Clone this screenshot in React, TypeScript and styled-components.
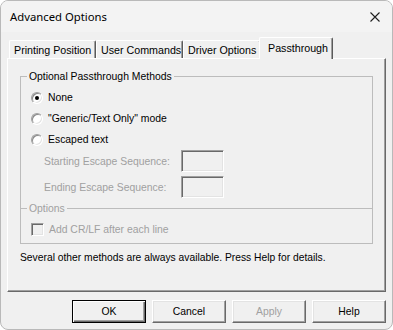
import React from 'react';
import styled, { createGlobalStyle } from 'styled-components';

const GlobalStyle = createGlobalStyle`
  html, body {
    margin: 0;
    padding: 0;
    background: #ffffff;
  }
  body {
    font-family: "Liberation Sans", Arial, sans-serif;
    font-size: 10.4px;
    color: #000;
  }
  * {
    box-sizing: border-box;
  }
`;

const Window = styled.div`
  width: 393px;
  height: 330px;
  display: flex;
  flex-direction: column;
  background: #f0f0f0;
  border: 1px solid #b9b9b9;
  border-radius: 8px;
  overflow: hidden;
`;

const TitleBar = styled.div`
  height: 31px;
  display: flex;
  align-items: center;
  justify-content: space-between;
  padding: 0 12px 0 9px;
  background: #f3f3f3;
  font-family: "Noto Sans", "Liberation Sans", sans-serif;
  font-size: 11.3px;
  color: #000;
`;

const Body = styled.div`
  display: flex;
  flex-direction: column;
  padding: 4px 6px 0 6px;
`;

const TabStrip = styled.div`
  height: 22px;
  display: flex;
  align-items: flex-end;
  padding-left: 2px;
  position: relative;
  z-index: 1;
  font-size: 10.7px;
`;

const Tab = styled.div<{ $w: number; $active?: boolean }>`
  width: ${p => p.$w}px;
  height: ${p => (p.$active ? 22 : 18)}px;
  margin-left: ${p => (p.$active ? -2 : 0)}px;
  margin-bottom: ${p => (p.$active ? -1 : 0)}px;
  display: flex;
  align-items: center;
  padding-left: ${p => (p.$active ? 8 : 4)}px;
  padding-bottom: ${p => (p.$active ? 2 : 0)}px;
  white-space: nowrap;
  overflow: hidden;
  background: #f0f0f0;
  border-top: 1px solid #ffffff;
  border-left: 1px solid #ffffff;
  border-right: 1px solid #5a5a5a;
  box-shadow: inset -1px 0 0 #a0a0a0;
  border-radius: 2px 2px 0 0;
`;

const Panel = styled.div`
  height: 234px;
  display: flex;
  flex-direction: column;
  padding: 17px 12px 0 12px;
  border-top: 1px solid #ffffff;
  border-left: 1px solid #ffffff;
  border-right: 1px solid #696969;
  border-bottom: 1px solid #696969;
  box-shadow: inset -1px -1px 0 #a0a0a0;
`;

const GroupBox = styled.div<{ $open?: boolean }>`
  position: relative;
  display: flex;
  flex-direction: column;
  border: 1px solid #bcbcbc;
  border-bottom: ${p => (p.$open ? 'none' : '1px solid #bcbcbc')};
  padding: 10px 0 ${p => (p.$open ? 10 : 4)}px 0;
`;

const Legend = styled.span<{ $disabled?: boolean }>`
  position: absolute;
  top: -7px;
  left: 6px;
  padding: 0 2px;
  line-height: 13px;
  background: #f0f0f0;
  color: ${p => (p.$disabled ? '#a0a0a0' : '#000')};
`;

const OptionRow = styled.div<{ $h: number }>`
  height: ${p => p.$h}px;
  display: flex;
  align-items: center;
  gap: 5px;
  padding-left: 10px;
`;

const Radio = styled.span<{ $checked?: boolean }>`
  position: relative;
  width: 12px;
  height: 12px;
  border-radius: 50%;
  background: #ffffff;
  border: 1px solid;
  border-color: #a0a0a0 #ffffff #ffffff #a0a0a0;
  box-shadow: inset 1px 1px 0 #8a8a8a, inset -1px -1px 0 #e3e3e3;
  &::after {
    content: '';
    display: ${p => (p.$checked ? 'block' : 'none')};
    position: absolute;
    left: 3px;
    top: 3px;
    width: 4px;
    height: 4px;
    border-radius: 50%;
    background: #000;
  }
`;

const CheckBox = styled.span`
  width: 13px;
  height: 13px;
  background: #f0f0f0;
  border: 1px solid;
  border-color: #a0a0a0 #ffffff #ffffff #a0a0a0;
  box-shadow: inset 1px 1px 0 #696969, inset -1px -1px 0 #e3e3e3;
`;

const Label = styled.span<{ $disabled?: boolean }>`
  white-space: nowrap;
  color: ${p => (p.$disabled ? '#a0a0a0' : '#000')};
`;

const EscapeRow = styled.div<{ $gap?: number }>`
  display: flex;
  align-items: center;
  padding-left: 23px;
  margin-top: ${p => p.$gap ?? 0}px;
`;

const EscapeLabel = styled.span`
  width: 137px;
  white-space: nowrap;
  color: #a0a0a0;
`;

const TextBox = styled.div`
  width: 43px;
  height: 22px;
  background: #f0f0f0;
  border: 1px solid;
  border-color: #a0a0a0 #ffffff #ffffff #a0a0a0;
  box-shadow: inset 1px 1px 0 #696969, inset -1px -1px 0 #e3e3e3;
`;

const Note = styled.div`
  margin-top: 7px;
  line-height: 13px;
  font-size: 10.3px;
  white-space: nowrap;
`;

const ButtonRow = styled.div`
  display: flex;
  justify-content: flex-end;
  gap: 6px;
  margin-top: 8px;
`;

const Button = styled.div<{ $default?: boolean; $disabled?: boolean }>`
  width: 74px;
  height: 23px;
  display: flex;
  align-items: center;
  justify-content: center;
  background: #f0f0f0;
  color: ${p => (p.$disabled ? '#a0a0a0' : '#000')};
  border: 1px solid;
  border-color: ${p => (p.$default ? '#000' : '#ffffff #696969 #696969 #ffffff')};
  box-shadow: ${p =>
    p.$default
      ? 'inset 1px 1px 0 #ffffff, inset -1px -1px 0 #696969, inset -2px -2px 0 #a0a0a0'
      : 'inset -1px -1px 0 #a0a0a0, inset 1px 1px 0 #e3e3e3'};
`;

const CloseIcon = () => (
  <svg width="10" height="10" viewBox="0 0 10 10">
    <path d="M0.5 0.5 L9.5 9.5 M9.5 0.5 L0.5 9.5" stroke="#1f1f1f" strokeWidth="1.1" fill="none" />
  </svg>
);

const tabs = [
  { label: 'Printing Position', w: 87 },
  { label: 'User Commands', w: 87 },
  { label: 'Driver Options', w: 78 },
  { label: 'Passthrough', w: 74, active: true },
];

const App: React.FC = () => {
  return (
    <>
      <GlobalStyle />
      <Window>
        <TitleBar>
          <span>Advanced Options</span>
          <CloseIcon />
        </TitleBar>
        <Body>
          <TabStrip>
            {tabs.map(t => (
              <Tab key={t.label} $w={t.w} $active={t.active}>
                {t.label}
              </Tab>
            ))}
          </TabStrip>
          <Panel>
            <GroupBox $open>
              <Legend>Optional Passthrough Methods</Legend>
              <OptionRow $h={21}>
                <Radio $checked />
                <Label>None</Label>
              </OptionRow>
              <OptionRow $h={21}>
                <Radio />
                <Label>"Generic/Text Only" mode</Label>
              </OptionRow>
              <OptionRow $h={21}>
                <Radio />
                <Label>Escaped text</Label>
              </OptionRow>
              <EscapeRow>
                <EscapeLabel>Starting Escape Sequence:</EscapeLabel>
                <TextBox />
              </EscapeRow>
              <EscapeRow $gap={4}>
                <EscapeLabel>Ending Escape Sequence:</EscapeLabel>
                <TextBox />
              </EscapeRow>
            </GroupBox>
            <GroupBox>
              <Legend $disabled>Options</Legend>
              <OptionRow $h={20}>
                <CheckBox />
                <Label $disabled>Add CR/LF after each line</Label>
              </OptionRow>
            </GroupBox>
            <Note>Several other methods are always available. Press Help for details.</Note>
          </Panel>
          <ButtonRow>
            <Button $default>OK</Button>
            <Button>Cancel</Button>
            <Button $disabled>Apply</Button>
            <Button>Help</Button>
          </ButtonRow>
        </Body>
      </Window>
    </>
  );
};

export default App;
